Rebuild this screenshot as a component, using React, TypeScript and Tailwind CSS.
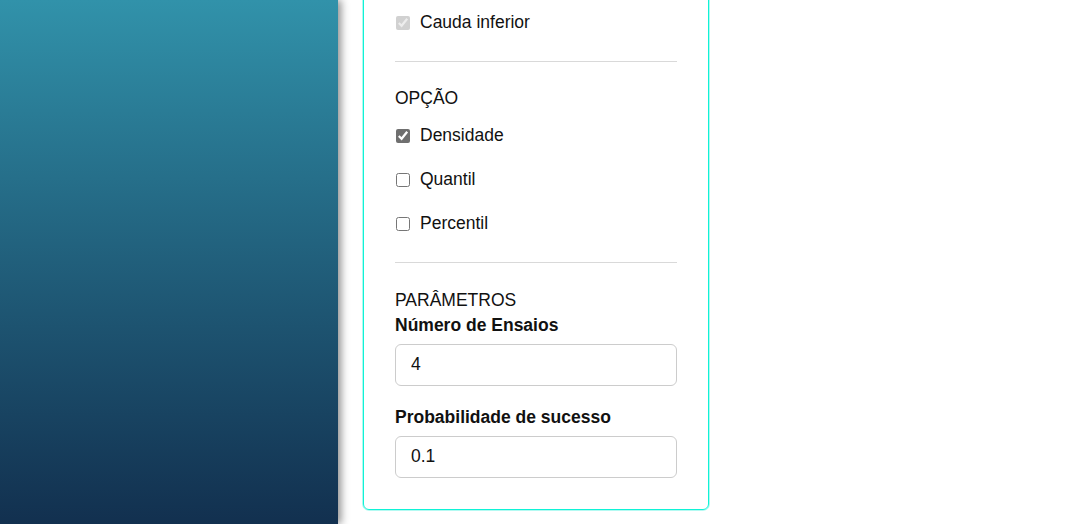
import { useState } from 'react';

type Opcao = 'densidade' | 'quantil' | 'percentil';

const opcoes: { id: Opcao; label: string }[] = [
  { id: 'densidade', label: 'Densidade' },
  { id: 'quantil', label: 'Quantil' },
  { id: 'percentil', label: 'Percentil' },
];

export default function App() {
  const [opcao, setOpcao] = useState<Opcao>('densidade');
  const [ensaios, setEnsaios] = useState('4');
  const [prob, setProb] = useState('0.1');

  return (
    <div
      className="flex h-[524px] w-full overflow-hidden bg-white text-[17.5px] text-[#111]"
      style={{ fontFamily: '"Liberation Sans", Arial, sans-serif' }}
    >
      {/* barra lateral */}
      <aside className="h-full w-[338px] shrink-0 bg-gradient-to-b from-[#3192aa] to-[#12304f] shadow-[3px_0_8px_rgba(0,0,0,0.45)]" />

      <main className="flex-1">
        <div className="ml-[25px] mt-[-20px] w-[346px] rounded-[6px] border border-[#10f2d6] px-[31px] pb-[31.5px] pt-[19.5px] shadow-[0_0_0_0.8px_rgba(30,240,215,0.45)]">
          {/* cauda */}
          <label className="flex h-[44px] items-center gap-[10px]">
            <input
              type="checkbox"
              checked
              disabled
              readOnly
              className="ml-[1px] h-[14px] w-[14px] accent-[#6f6f6f]"
            />
            <span>Cauda inferior</span>
          </label>

          <hr className="mt-[16px] border-t border-[#d9d9d9]" />

          {/* opção */}
          <p className="mt-[24px] leading-[25px]">OPÇÃO</p>
          <div className="mt-[3px] flex flex-col">
            {opcoes.map((o) => (
              <label key={o.id} className="flex h-[44px] items-center gap-[10px]">
                <input
                  type="checkbox"
                  checked={opcao === o.id}
                  onChange={() => setOpcao(o.id)}
                  className="ml-[1px] h-[14px] w-[14px] accent-[#6f6f6f]"
                />
                <span>{o.label}</span>
              </label>
            ))}
          </div>

          <hr className="mt-[16px] border-t border-[#d9d9d9]" />

          {/* parâmetros */}
          <p className="mt-[25px] leading-[25px]">PARÂMETROS</p>
          <label className="block font-bold leading-[25px]">Número de Ensaios</label>
          <input
            value={ensaios}
            onChange={(e) => setEnsaios(e.target.value)}
            className="mt-[6px] h-[42px] w-full rounded-[6px] border border-[#cccccc] px-[15px] outline-none"
          />

          <label className="mt-[19px] block font-bold leading-[25px]">
            Probabilidade de sucesso
          </label>
          <input
            value={prob}
            onChange={(e) => setProb(e.target.value)}
            className="mt-[6px] h-[42px] w-full rounded-[6px] border border-[#cccccc] px-[15px] outline-none"
          />
        </div>
      </main>
    </div>
  );
}
